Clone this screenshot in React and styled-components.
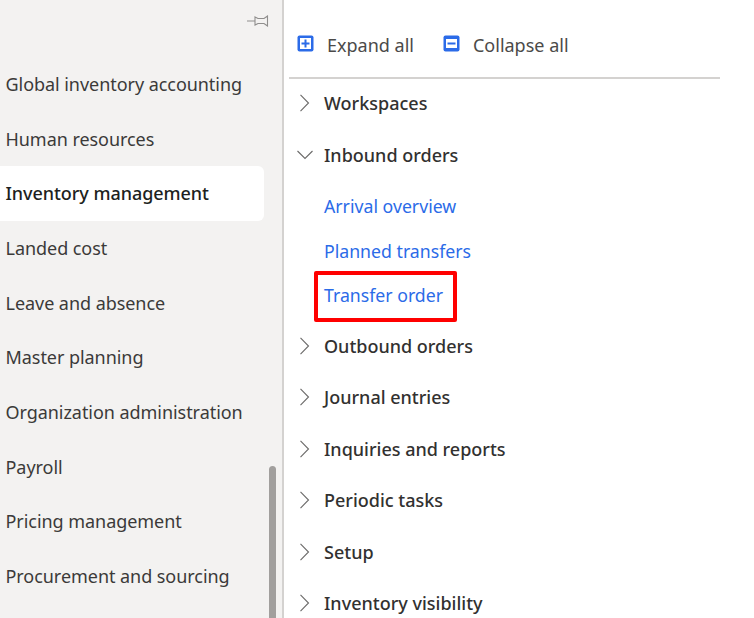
import React from 'react';
import styled, { createGlobalStyle } from 'styled-components';

const modules = [
  "Global inventory accounting",
  "Human resources",
  "Inventory management",
  "Landed cost",
  "Leave and absence",
  "Master planning",
  "Organization administration",
  "Payroll",
  "Pricing management",
  "Procurement and sourcing",
];

const GlobalStyle = createGlobalStyle`
  html, body {
    margin: 0;
    padding: 0;
    background: #fff;
    overflow: hidden;
  }
  body {
    font-family: "Noto Sans", "Liberation Sans", sans-serif;
  }
`;

const Chevron = ({ open }) => (
  <ChevronSvg viewBox="0 0 16 18" width="16" height="18" fill="none">
    <path
      d={open ? "M0.5 5 L8 12.5 L15.5 5" : "M3.5 0.8 L11.5 9 L3.5 17.2"}
      stroke="#6b6a69"
      strokeWidth="1.1"
    />
  </ChevronSvg>
);

const TreeNode = ({ label, open }) => (
  <NodeRow>
    <Chevron open={open} />
    <NodeLabel>{label}</NodeLabel>
  </NodeRow>
);

const ToolIcon = ({ minus }) => (
  <svg viewBox="0 0 17 17" width="17" height="17">
    <rect x="0.5" y="0.5" width="16" height="16" rx="2" fill="#2b6be8" />
    <rect x="3" y={minus ? 4 : 3} width="11" height={minus ? 9 : 11} fill="#fff" />
    {minus ? (
      <rect x="4.5" y="7.5" width="8" height="2" fill="#2b6be8" />
    ) : (
      <path d="M8.5 4.5 V12.5 M4.5 8.5 H12.5" stroke="#2b6be8" strokeWidth="2" />
    )}
  </svg>
);

export default function App() {
  return (
    <Page>
      <GlobalStyle />
      <Sidebar>
        <PinRow>
          <svg viewBox="0 0 22 12" width="22" height="12" fill="none" stroke="#8f8e8d" strokeWidth="1.1">
            <path d="M0 6 H8 M8 2 L11 3.5 H17 L20.5 1 V11 L17 8.5 H11 L8 10 Z" />
          </svg>
        </PinRow>
        {modules.map(item => (
          <ModuleItem key={item} selected={item === "Inventory management"}>
            {item}
          </ModuleItem>
        ))}
        <ScrollThumb />
      </Sidebar>
      <Main>
        <Toolbar>
          <ToolButton>
            <ToolIcon />
            Expand all
          </ToolButton>
          <ToolButton>
            <ToolIcon minus />
            Collapse all
          </ToolButton>
        </Toolbar>
        <Divider />
        <TreeNode label="Workspaces" />
        <TreeNode label="Inbound orders" open />
        <LinkGroup>
          <LinkRow>Arrival overview</LinkRow>
          <LinkRow>Planned transfers</LinkRow>
          <LinkRow>
            Transfer order
            <Highlight />
          </LinkRow>
        </LinkGroup>
        <TreeNode label="Outbound orders" />
        <TreeNode label="Journal entries" />
        <TreeNode label="Inquiries and reports" />
        <TreeNode label="Periodic tasks" />
        <TreeNode label="Setup" />
        <TreeNode label="Inventory visibility" />
      </Main>
    </Page>
  );
}

const Page = styled.div`
  display: flex;
  width: 754px;
  height: 618px;
  overflow: hidden;
  background: #fff;
`;

const Sidebar = styled.nav`
  position: relative;
  box-sizing: border-box;
  flex: 0 0 284px;
  height: 618px;
  overflow: hidden;
  background: #f3f2f1;
  border-right: 2px solid #d4d2d0;
`;

const PinRow = styled.div`
  display: flex;
  justify-content: flex-end;
  height: 56.5px;
  padding: 15px 13px 0 0;
  box-sizing: border-box;
`;

const ModuleItem = styled.div`
  display: flex;
  align-items: center;
  box-sizing: border-box;
  width: 264px;
  height: 54.7px;
  padding-left: 5.5px;
  font-size: 18px;
  letter-spacing: -0.05px;
  white-space: nowrap;
  color: ${props => (props.selected ? "#201f1e" : "#3b3a39")};
  font-weight: ${props => (props.selected ? 500 : 400)};
  background: ${props => (props.selected ? "#fff" : "transparent")};
  border-radius: ${props => (props.selected ? "0 6px 6px 0" : "0")};
`;

const ScrollThumb = styled.div`
  position: absolute;
  left: 269px;
  top: 466px;
  width: 7px;
  height: 160px;
  border-radius: 4px 4px 0 0;
  background: #a19f9d;
`;

const Main = styled.main`
  flex: 1;
  min-width: 0;
  padding-left: 5px;
`;

const Toolbar = styled.div`
  display: flex;
  align-items: center;
  gap: 29px;
  height: 77px;
  padding: 13px 0 0 8px;
  box-sizing: border-box;
`;

const ToolButton = styled.div`
  display: flex;
  align-items: center;
  gap: 13px;
  font-size: 18px;
  color: #4b4a49;

  svg {
    margin-top: -3px;
  }
`;

const Divider = styled.div`
  width: 431px;
  height: 2px;
  background: #d4d2d0;
`;

const NodeRow = styled.div`
  display: flex;
  align-items: center;
  gap: 11px;
  box-sizing: border-box;
  height: 51.5px;
  padding: 0 0 3px 8px;
`;

const ChevronSvg = styled.svg`
  flex: none;
`;

const NodeLabel = styled.span`
  font-size: 18px;
  font-weight: 500;
  color: #323130;
`;

const LinkGroup = styled.div`
  padding: 2px 0 4px;
`;

const LinkRow = styled.div`
  position: relative;
  display: flex;
  align-items: center;
  height: 44.5px;
  padding-left: 35px;
  font-size: 17.7px;
  color: #2b6be8;
  width: fit-content;
`;

const Highlight = styled.span`
  position: absolute;
  left: 25px;
  top: -2px;
  width: 143px;
  height: 51px;
  box-sizing: border-box;
  border: 4px solid #ff0000;
  border-radius: 2px;
`;
